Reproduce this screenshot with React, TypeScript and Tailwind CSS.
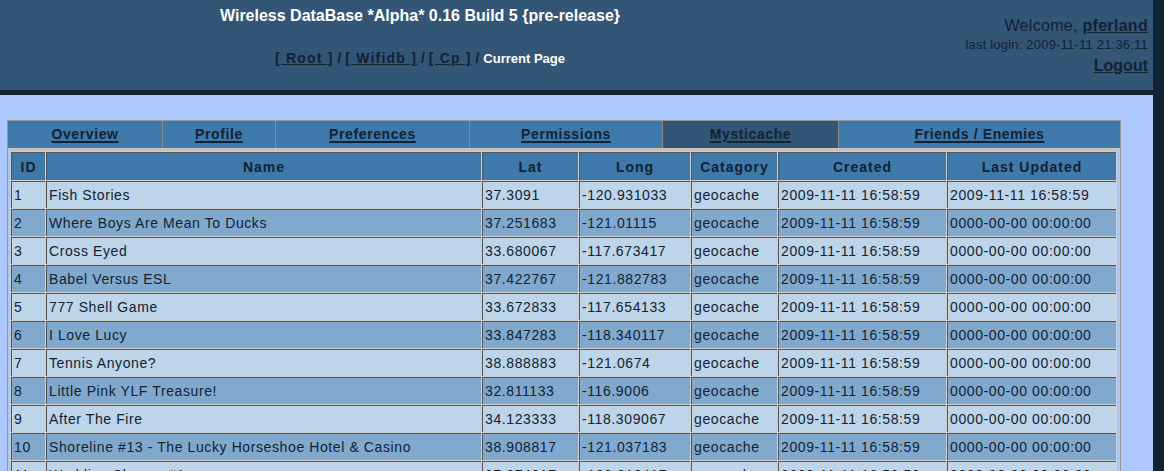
import React from 'react';

const rows = [
    ['1', 'Fish Stories', '37.3091', '-120.931033', 'geocache', '2009-11-11 16:58:59', '2009-11-11 16:58:59'],
    ['2', 'Where Boys Are Mean To Ducks', '37.251683', '-121.01115', 'geocache', '2009-11-11 16:58:59', '0000-00-00 00:00:00'],
    ['3', 'Cross Eyed', '33.680067', '-117.673417', 'geocache', '2009-11-11 16:58:59', '0000-00-00 00:00:00'],
    ['4', 'Babel Versus ESL', '37.422767', '-121.882783', 'geocache', '2009-11-11 16:58:59', '0000-00-00 00:00:00'],
    ['5', '777 Shell Game', '33.672833', '-117.654133', 'geocache', '2009-11-11 16:58:59', '0000-00-00 00:00:00'],
    ['6', 'I Love Lucy', '33.847283', '-118.340117', 'geocache', '2009-11-11 16:58:59', '0000-00-00 00:00:00'],
    ['7', 'Tennis Anyone?', '38.888883', '-121.0674', 'geocache', '2009-11-11 16:58:59', '0000-00-00 00:00:00'],
    ['8', 'Little Pink YLF Treasure!', '32.811133', '-116.9006', 'geocache', '2009-11-11 16:58:59', '0000-00-00 00:00:00'],
    ['9', 'After The Fire', '34.123333', '-118.309067', 'geocache', '2009-11-11 16:58:59', '0000-00-00 00:00:00'],
    ['10', 'Shoreline #13 - The Lucky Horseshoe Hotel & Casino', '38.908817', '-121.037183', 'geocache', '2009-11-11 16:58:59', '0000-00-00 00:00:00'],
    ['11', 'Wedding Shower #1', '37.874817', '-122.010417', 'geocache', '2009-11-11 16:58:59', '0000-00-00 00:00:00'],
];

const tabs = [
    { label: 'Overview', w: 'w-[155px]' },
    { label: 'Profile', w: 'w-[113px]' },
    { label: 'Preferences', w: 'w-[194px]' },
    { label: 'Permissions', w: 'w-[193px]' },
    { label: 'Mysticache', w: 'w-[176px]', active: true },
    { label: 'Friends / Enemies', w: 'flex-1' },
];

const cols = [
    { label: 'ID', w: 'w-[34px]' },
    { label: 'Name', w: 'w-[435px]' },
    { label: 'Lat', w: 'w-[96px]' },
    { label: 'Long', w: 'w-[111px]' },
    { label: 'Catagory', w: 'w-[86px]' },
    { label: 'Created', w: 'w-[168px]' },
    { label: 'Last Updated', w: 'w-[169px]' },
];

export default function App() {
    return (
        <div className="min-h-[471px] bg-[#112233] font-['Liberation_Sans',Arial,sans-serif] text-[#112233]">
            <div className="min-h-[471px] w-[1153px] bg-[#adc8fe]">
                <header className="flex h-[95px] border-b-[5px] border-[#112233] bg-[#335677]">
                    <div className="w-[840px] pt-[6px] text-center">
                        <div className="text-[16px] leading-[20px] font-bold text-white">
                            Wireless DataBase *Alpha* 0.16 Build 5 {'{pre-release}'}
                        </div>
                        <div className="mt-[24px] text-[14px] leading-[16px] font-bold">
                            <a className="tracking-[1.2px] underline">[ Root ]</a> /{' '}
                            <a className="tracking-[1.2px] underline">[ Wifidb ]</a> /{' '}
                            <a className="tracking-[1.2px] underline">[ Cp ]</a> /{' '}
                            <span className="text-[13px] text-white">Current Page</span>
                        </div>
                    </div>
                    <div className="flex-1 pt-[15px] pr-[5px] text-right">
                        <div className="text-[16px] leading-[21px] tracking-[0.3px]">
                            Welcome, <a className="font-bold underline">pferland</a>
                        </div>
                        <div className="mt-[1px] text-[13px] leading-[16px] tracking-[0.2px]">
                            last login: 2009-11-11 21:36:11
                        </div>
                        <div className="mt-[3px] text-[16px] leading-[20px] font-bold">
                            <a className="underline">Logout</a>
                        </div>
                    </div>
                </header>

                <div className="ml-[7px] mt-[25px] w-[1114px] border border-[#9a9a9a] pb-2">
                    <div className="flex h-[28px] border-b border-[#c4c4c4]">
                        {tabs.map((t) => (
                            <div
                                key={t.label}
                                className={`${t.w} flex items-center justify-center border-r border-[#8a8a8a] last:border-r-0 ${
                                    t.active ? 'bg-[#335677]' : 'bg-[#3e79aa]'
                                }`}
                            >
                                <a className="text-[14px] font-bold tracking-[0.6px] underline decoration-2 underline-offset-2">
                                    {t.label}
                                </a>
                            </div>
                        ))}
                    </div>
                    <table className="mt-[1px] ml-[1px] table-fixed border-separate border-spacing-[1px] border border-[#c0c0c0] bg-[#cfcfcf] text-[14px]">
                        <thead>
                            <tr>
                                {cols.map((c) => (
                                    <th
                                        key={c.label}
                                        className={`${c.w} h-[28px] border-t border-l border-[#555] bg-[#3e79aa] p-0 pt-[1px] text-center font-bold tracking-[1px]`}
                                    >
                                        {c.label}
                                    </th>
                                ))}
                            </tr>
                        </thead>
                        <tbody>
                            {rows.map((r, i) => (
                                <tr key={r[0]} className={i % 2 === 0 ? 'bg-[#bdd4e9]' : 'bg-[#81a8cd]'}>
                                    {r.map((cell, j) => (
                                        <td
                                            key={j}
                                            className="h-[27px] overflow-hidden border-t border-l border-[#555] px-[2px] py-0 tracking-[0.6px] whitespace-nowrap"
                                        >
                                            {cell}
                                        </td>
                                    ))}
                                </tr>
                            ))}
                        </tbody>
                    </table>
                </div>
            </div>
        </div>
    );
}
